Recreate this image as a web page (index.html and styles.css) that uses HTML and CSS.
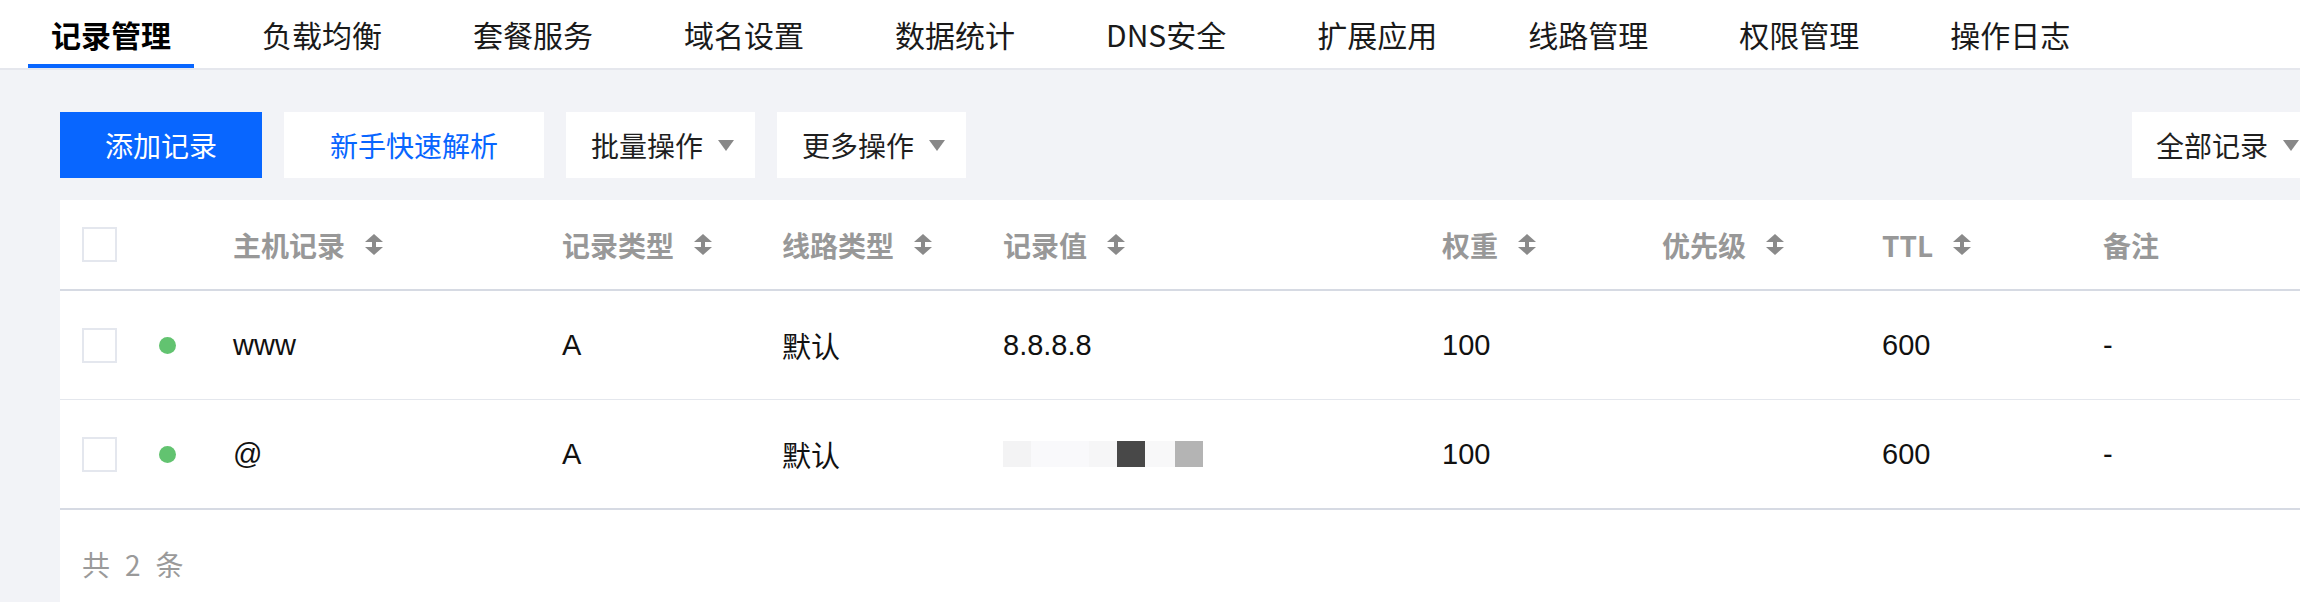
FILE: index.html
```html
<!DOCTYPE html>
<html lang="zh-CN">
<head>
<meta charset="utf-8">
<title>记录管理</title>
<link rel="stylesheet" href="styles.css">
</head>
<body>
<nav class="tabs">
  <a class="tab active">记录管理</a>
  <a class="tab">负载均衡</a>
  <a class="tab">套餐服务</a>
  <a class="tab">域名设置</a>
  <a class="tab">数据统计</a>
  <a class="tab">DNS安全</a>
  <a class="tab">扩展应用</a>
  <a class="tab">线路管理</a>
  <a class="tab">权限管理</a>
  <a class="tab">操作日志</a>
</nav>
<main class="main">
  <div class="toolbar">
    <div class="toolbar-left">
      <button class="btn btn-primary">添加记录</button>
      <button class="btn btn-link">新手快速解析</button>
      <button class="btn btn-drop">批量操作<span class="caret"></span></button>
      <button class="btn btn-drop">更多操作<span class="caret"></span></button>
    </div>
    <button class="btn btn-drop btn-right">全部记录<span class="caret"></span></button>
  </div>

  <section class="card">
    <div class="row head">
      <div class="cell"><span class="checkbox"></span></div>
      <div class="cell"></div>
      <div class="cell">主机记录<svg class="sort" viewBox="0 0 18 21"><polygon points="9,0 18,8 0,8"/><rect x="7" y="7" width="4" height="7"/><polygon points="0,13 18,13 9,21"/></svg></div>
      <div class="cell">记录类型<svg class="sort" viewBox="0 0 18 21"><polygon points="9,0 18,8 0,8"/><rect x="7" y="7" width="4" height="7"/><polygon points="0,13 18,13 9,21"/></svg></div>
      <div class="cell">线路类型<svg class="sort" viewBox="0 0 18 21"><polygon points="9,0 18,8 0,8"/><rect x="7" y="7" width="4" height="7"/><polygon points="0,13 18,13 9,21"/></svg></div>
      <div class="cell">记录值<svg class="sort" viewBox="0 0 18 21"><polygon points="9,0 18,8 0,8"/><rect x="7" y="7" width="4" height="7"/><polygon points="0,13 18,13 9,21"/></svg></div>
      <div class="cell">权重<svg class="sort" viewBox="0 0 18 21"><polygon points="9,0 18,8 0,8"/><rect x="7" y="7" width="4" height="7"/><polygon points="0,13 18,13 9,21"/></svg></div>
      <div class="cell">优先级<svg class="sort" viewBox="0 0 18 21"><polygon points="9,0 18,8 0,8"/><rect x="7" y="7" width="4" height="7"/><polygon points="0,13 18,13 9,21"/></svg></div>
      <div class="cell">TTL<svg class="sort" viewBox="0 0 18 21"><polygon points="9,0 18,8 0,8"/><rect x="7" y="7" width="4" height="7"/><polygon points="0,13 18,13 9,21"/></svg></div>
      <div class="cell">备注</div>
    </div>

    <div class="row body">
      <div class="cell"><span class="checkbox"></span></div>
      <div class="cell"><span class="dot"></span></div>
      <div class="cell">www</div>
      <div class="cell">A</div>
      <div class="cell">默认</div>
      <div class="cell">8.8.8.8</div>
      <div class="cell">100</div>
      <div class="cell"></div>
      <div class="cell">600</div>
      <div class="cell">-</div>
    </div>

    <div class="row body last">
      <div class="cell"><span class="checkbox"></span></div>
      <div class="cell"><span class="dot"></span></div>
      <div class="cell">@</div>
      <div class="cell">A</div>
      <div class="cell">默认</div>
      <div class="cell"><span class="redact"><i class="r1"></i><i class="r2"></i><i class="r3"></i><i class="r4"></i><i class="r5"></i><i class="r6"></i></span></div>
      <div class="cell">100</div>
      <div class="cell"></div>
      <div class="cell">600</div>
      <div class="cell">-</div>
    </div>

    <div class="footer"><span>共</span><span>2</span><span>条</span></div>
  </section>
</main>
</body>
</html>
```

FILE: styles.css
```css
html, body {
  margin: 0;
  padding: 0;
}
body {
  width: 2300px;
  height: 602px;
  overflow: hidden;
  background: #f2f3f7;
  font-family: "Noto Sans CJK SC", "Liberation Sans", sans-serif;
  color: #1f1f1f;
}

/* Tabs */
.tabs {
  display: flex;
  gap: 45px;
  height: 68px;
  padding-left: 28px;
  background: #fff;
  border-bottom: 2px solid #e5e7ed;
}
.tab {
  display: flex;
  align-items: center;
  padding: 0 23px;
  font-size: 30px;
  color: #1a1a1a;
  border-bottom: 4px solid transparent;
  box-sizing: border-box;
  height: 68px;
  padding-top: 4px;
  white-space: nowrap;
}
.tab.active {
  font-weight: 700;
  color: #000;
  border-bottom-color: #0866ff;
}

/* Main */
.main {
  width: 2260px;
  padding: 42px 0 0 60px;
}
.toolbar {
  display: flex;
  justify-content: space-between;
  margin-bottom: 22px;
}
.toolbar-left {
  display: flex;
  gap: 22px;
}
.btn {
  display: flex;
  align-items: center;
  height: 66px;
  border: 0;
  margin: 0;
  padding: 0 46px;
  background: #fff;
  font-family: "Noto Sans CJK SC", sans-serif;
  font-size: 28px;
  color: #1f1f1f;
  white-space: nowrap;
}
.btn-primary {
  background: #0866ff;
  color: #fff;
  padding: 0 45px;
}
.btn-link {
  color: #0866ff;
}
.btn-drop {
  padding: 0 21px 0 25px;
}
.btn-right {
  padding-left: 24px;
}
.caret {
  display: inline-block;
  width: 0;
  height: 0;
  margin-left: 15px;
  border-left: 8.5px solid transparent;
  border-right: 8.5px solid transparent;
  border-top: 11px solid #888;
}

/* Card / table */
.card {
  background: #fff;
  height: 420px;
}
.row {
  display: grid;
  grid-template-columns: 77px 74px 329px 220px 221px 439px 220px 220px 221px 1fr;
  padding-left: 22px;
  align-items: center;
}
.row.head {
  height: 89px;
  border-bottom: 2px solid #d6dae3;
  font-size: 28px;
  font-weight: 700;
  color: #989898;
}
.row.body {
  height: 108px;
  border-bottom: 1px solid #e4e7ed;
  font-family: "Liberation Sans", "Noto Sans CJK SC", sans-serif;
  font-size: 29px;
  color: #111;
}
.row.body.last {
  border-bottom: 2px solid #d6dae3;
}
.cell {
  display: flex;
  align-items: center;
  white-space: nowrap;
}
.sort {
  width: 18px;
  height: 21px;
  margin-left: 20px;
  fill: #8a8a8a;
}
.checkbox {
  display: block;
  width: 31px;
  height: 31px;
  border: 2px solid #e4e7ee;
  background: #fff;
}
.dot {
  display: block;
  width: 17px;
  height: 17px;
  border-radius: 50%;
  background: #62c370;
}
.redact {
  display: flex;
  height: 26px;
}
.redact i {
  display: block;
  height: 26px;
}
.redact .r1 { width: 28px; background: #f3f3f4; }
.redact .r2 { width: 58px; background: #f9f9fb; }
.redact .r3 { width: 28px; background: #f6f6f7; }
.redact .r4 { width: 28px; background: #484848; }
.redact .r5 { width: 30px; background: #f8f8f9; }
.redact .r6 { width: 28px; background: #b4b4b4; }

.footer {
  display: flex;
  gap: 15px;
  padding: 34px 0 0 22px;
  font-size: 28px;
  color: #9a9a9a;
}
```
